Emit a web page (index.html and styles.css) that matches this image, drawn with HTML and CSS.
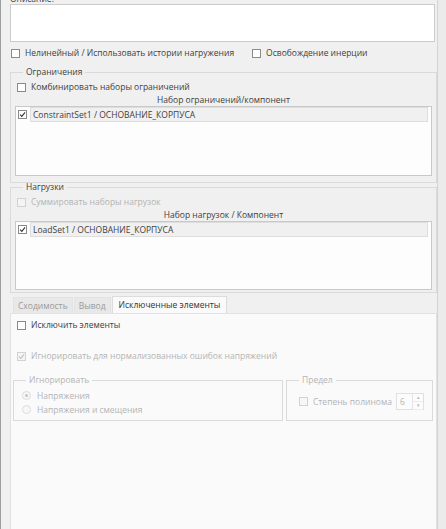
FILE: index.html
```html
<!DOCTYPE html>
<html lang="ru">
<head>
    <meta charset="UTF-8">
    <title>Анализ</title>
    <link rel="stylesheet" href="styles.css">
</head>
<body>

<div class="window">
    <div class="desc-label">Описание:</div>
    <div class="desc-box"></div>

    <div class="opt-row">
        <label class="chk"><span class="box"></span>Нелинейный / Использовать истории нагружения</label>
        <label class="chk chk-second"><span class="box"></span>Освобождение инерции</label>
    </div>

    <!-- Ограничения -->
    <fieldset class="group group-first">
        <legend>Ограничения</legend>
        <label class="chk chk-in"><span class="box"></span>Комбинировать наборы ограничений</label>
        <div class="list-head">Набор ограничений/компонент</div>
        <div class="list">
            <div class="list-row">
                <span class="box checked"><svg viewBox="0 0 8 8"><path d="M1.2 4.2 L3.2 6.2 L6.9 1.6"/></svg></span>
                <span class="row-text">ConstraintSet1 / ОСНОВАНИЕ_КОРПУСА</span>
            </div>
        </div>
    </fieldset>

    <!-- Нагрузки -->
    <fieldset class="group group-second">
        <legend>Нагрузки</legend>
        <label class="chk chk-in disabled"><span class="box"></span>Суммировать наборы нагрузок</label>
        <div class="list-head">Набор нагрузок / Компонент</div>
        <div class="list list-short">
            <div class="list-row">
                <span class="box checked"><svg viewBox="0 0 8 8"><path d="M1.2 4.2 L3.2 6.2 L6.9 1.6"/></svg></span>
                <span class="row-text">LoadSet1 / ОСНОВАНИЕ_КОРПУСА</span>
            </div>
        </div>
    </fieldset>

    <!-- Вкладки -->
    <div class="tabs">
        <div class="tab">Сходимость</div>
        <div class="tab">Вывод</div>
        <div class="tab active">Исключенные элементы</div>
    </div>
    <div class="pane">
        <label class="chk"><span class="box"></span>Исключить элементы</label>
        <label class="chk disabled ignore-norm"><span class="box checked"><svg viewBox="0 0 8 8"><path d="M1.2 4.2 L3.2 6.2 L6.9 1.6"/></svg></span>Игнорировать для нормализованных ошибок напряжений</label>

        <div class="sub-groups">
            <fieldset class="group sub ignore">
                <legend>Игнорировать</legend>
                <label class="radio radio-first"><span class="dot on"></span>Напряжения</label>
                <label class="radio"><span class="dot"></span>Напряжения и смещения</label>
            </fieldset>
            <fieldset class="group sub limit">
                <legend>Предел</legend>
                <div class="limit-row">
                    <label class="chk"><span class="box"></span>Степень полинома</label>
                    <div class="spin">
                        <span class="spin-val">6</span>
                        <span class="spin-btns">
                            <span class="arrow">&#9652;</span>
                            <span class="arrow">&#9662;</span>
                        </span>
                    </div>
                </div>
            </fieldset>
        </div>
    </div>
</div>

</body>
</html>
```

FILE: styles.css
```css
body {
    margin: 0;
    background-color: #ebebeb;
    font-family: "Open Sans", "Noto Sans", sans-serif;
    font-size: 8.5px;
    color: #404040;
    overflow: hidden;
}
.window {
    box-sizing: border-box;
    width: 438px;
    height: 529px;
    background-color: #f0f0f0;
    border-left: 1px solid #9d9d9d;
    border-right: 1px solid #d4d4d4;
    padding-left: 9px;
    display: flex;
    flex-direction: column;
}
.desc-label {
    line-height: 12px;
    margin-top: -7px;
}
.desc-box {
    box-sizing: border-box;
    height: 38px;
    margin-top: -1px;
    margin-right: 2px;
    background-color: #fff;
    border: 1px solid #cbcbcb;
}
.opt-row {
    display: flex;
    margin-top: 5px;
    height: 12px;
}
.chk {
    display: flex;
    align-items: center;
    line-height: 12px;
    white-space: nowrap;
}
.box {
    box-sizing: border-box;
    width: 9px;
    height: 9px;
    border: 1px solid #8a8a8a;
    background-color: #fff;
    margin: 0 5px 0 1px;
    flex-shrink: 0;
    display: flex;
}
.box svg {
    width: 7px;
    height: 7px;
    fill: none;
    stroke: #333;
    stroke-width: 1.2;
}
.chk-second {
    margin-left: 17px;
}
.disabled {
    color: #b4b4b4;
}
.disabled .box {
    border-color: #d2d2d2;
    background-color: #f4f4f4;
}
.disabled .box svg {
    stroke: #c0c0c0;
}

/* group boxes */
.group {
    margin: 0;
    padding: 0 4px 0 4px;
    border: 1px solid #dadada;
    min-width: 0;
}
.group legend {
    line-height: 10px;
    padding: 0 3px;
    margin-left: 8px;
}
.group-first {
    margin-top: 8px;
    padding-bottom: 6px;
}
.group-second {
    margin-top: -1px;
    padding-bottom: 2px;
}
.chk-in {
    margin-top: 4px;
    margin-left: 1px;
}
.list-head {
    text-align: center;
    line-height: 12px;
    margin-top: 1px;
}
.list {
    box-sizing: border-box;
    height: 70px;
    background-color: #fdfdfd;
    border: 1px solid #c9c9c9;
}
.list-short {
    height: 69px;
}
.list-row {
    display: flex;
    align-items: center;
    height: 15px;
}
.list-row .box {
    margin: 0 3px 0 2px;
}
.row-text {
    flex: 1;
    box-sizing: border-box;
    height: 15px;
    line-height: 14px;
    padding-left: 2px;
    background-color: #f0f0f0;
    border: 1px solid #dedede;
    margin-right: 3px;
}

/* tabs */
.tabs {
    display: flex;
    align-items: flex-end;
    margin-top: 3px;
    padding-left: 3px;
    height: 17px;
}
.tab {
    height: 16px;
    line-height: 15px;
    padding: 0 4px;
    color: #9a9a9a;
    background-color: #e8e8e8;
    border: 1px solid #e2e2e2;
    border-bottom: none;
    box-sizing: border-box;
    margin-right: 1px;
}
.tab.active {
    height: 17px;
    color: #333;
    background-color: #fafafa;
    border-color: #dcdcdc;
    padding: 0 6px;
}
.pane {
    flex: 1;
    background-color: #fafafa;
    border: 1px solid #e2e2e2;
    border-bottom: none;
    padding: 5px 0 0 5px;
    display: flex;
    flex-direction: column;
}
.ignore-norm {
    margin-top: 19px;
}
.sub-groups {
    display: flex;
    margin-top: 13px;
    margin-left: -3px;
    margin-right: 3px;
}
.sub {
    color: #b4b4b4;
    padding-bottom: 4px;
}
.ignore {
    width: 270px;
    box-sizing: border-box;
    margin-right: 3px;
}
.limit {
    flex: 1;
}
.radio {
    display: flex;
    align-items: center;
    height: 14px;
    margin-left: 4px;
}
.radio-first {
    margin-top: 3px;
}
.dot {
    box-sizing: border-box;
    width: 9px;
    height: 9px;
    border-radius: 50%;
    border: 1px solid #dcdcdc;
    background-color: #f7f7f7;
    margin-right: 6px;
    display: flex;
    align-items: center;
    justify-content: center;
}
.dot.on::after {
    content: "";
    width: 3px;
    height: 3px;
    border-radius: 50%;
    background-color: #c4c4c4;
}
.limit-row {
    display: flex;
    align-items: center;
    justify-content: space-between;
    margin-top: 8px;
    padding-left: 7px;
    padding-right: 4px;
    height: 17px;
}
.limit .box {
    border-color: #d2d2d2;
    background-color: #f7f7f7;
}
.spin {
    display: flex;
    box-sizing: border-box;
    width: 28px;
    height: 17px;
    border: 1px solid #e0e0e0;
    background-color: #fcfcfc;
}
.spin-val {
    flex: 1;
    line-height: 15px;
    padding-left: 3px;
}
.spin-btns {
    width: 10px;
    display: flex;
    flex-direction: column;
    border-left: 1px solid #e4e4e4;
}
.arrow {
    flex: 1;
    font-size: 5px;
    line-height: 7px;
    text-align: center;
    border-bottom: 1px solid #ececec;
}
```
